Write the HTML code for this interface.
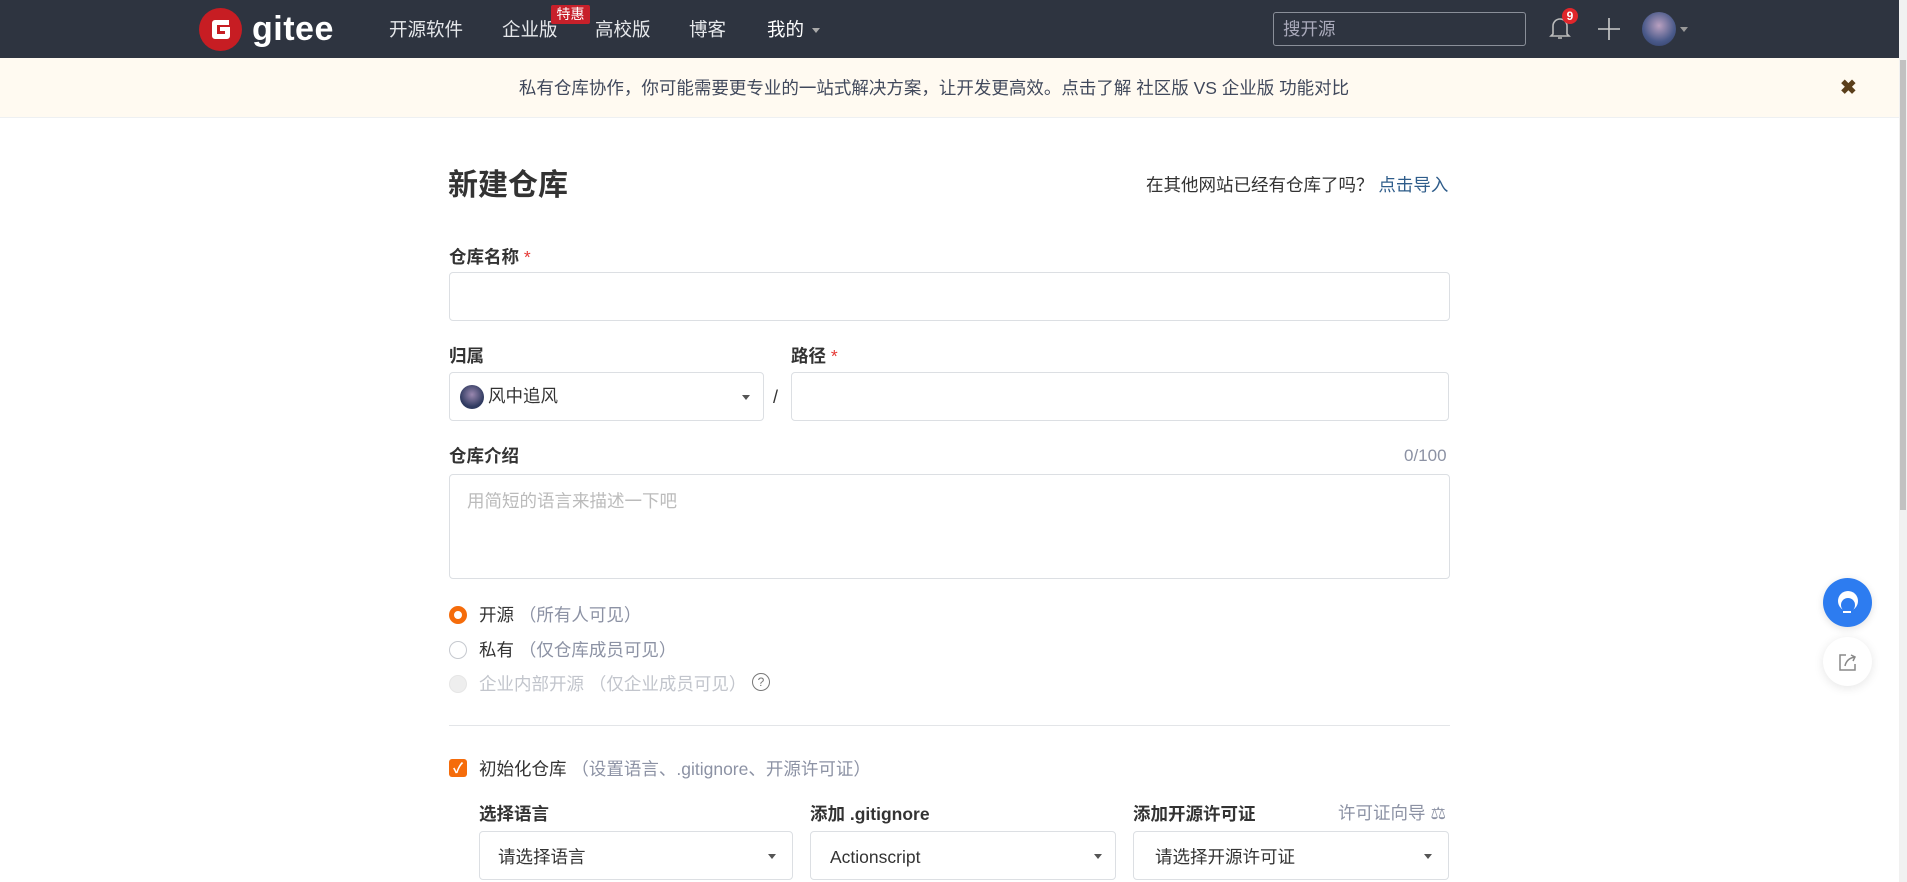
<!DOCTYPE html>
<html><head><meta charset="utf-8"><style>
*{box-sizing:border-box;margin:0;padding:0}
body{width:1907px;height:882px;overflow:hidden;background:#fff;font-family:"Liberation Sans","Noto Sans CJK SC",sans-serif;color:#40485b;position:relative}
.abs{position:absolute;line-height:1.2}
.hdr{left:0;top:0;width:1899px;height:58px;background:#2e3440}
.nav{color:#e6e8eb;font-size:18.5px;top:19px}
.banner{left:0;top:58px;width:1899px;height:60px;background:#fffaf1;border-bottom:1px solid #eef0f2}
.lbl{font-size:17.5px;font-weight:bold;color:#333}
.star{color:#e53935;font-weight:normal}
.box{border:1px solid #dcdfe3;border-radius:4px;background:#fff}
.caret{width:0;height:0;border-left:4px solid transparent;border-right:4px solid transparent;border-top:5px solid #555}
.radio{width:18px;height:18px;border-radius:50%;border:1px solid #c6c9cf;background:#fff}
.t16{font-size:17.5px;color:#333}
.gray{color:#8c92a4}
</style></head><body>
<div class="abs hdr"></div>
<svg class="abs" style="left:199px;top:8px" width="43" height="43" viewBox="0 0 43 43"><circle cx="21.5" cy="21.5" r="21.5" fill="#c71d23"/><path d="M13 15a3 3 0 0 1 3-3h14v5H18v9h8v-3h-5v-4h10v9a3 3 0 0 1-3 3H16a3 3 0 0 1-3-3z" fill="#fff"/></svg>
<div class="abs" style="left:252px;top:9px;font-size:34px;font-weight:bold;color:#fff;letter-spacing:0.5px">gitee</div>
<div class="abs nav" style="left:389px">开源软件</div>
<div class="abs nav" style="left:502px">企业版</div>
<div class="abs" style="left:551px;top:5px;width:39px;height:19px;background:#c7202a;color:#fff;font-size:14px;text-align:center;line-height:19px;border-radius:2px">特惠</div>
<div class="abs nav" style="left:595px">高校版</div>
<div class="abs nav" style="left:689px">博客</div>
<div class="abs nav" style="left:767px;color:#fff">我的</div>
<div class="abs caret" style="left:812px;top:28px;border-top-color:#aaa"></div>
<div class="abs" style="left:1273px;top:12px;width:253px;height:34px;border:1px solid #8a8f99;border-radius:3px;color:#aab;font-size:17.5px;padding:6px 0 0 9px">搜开源</div>
<svg class="abs" style="left:1548px;top:14px" width="24" height="28" viewBox="0 0 24 28"><path d="M5 20V12a7 7 0 0 1 14 0v8l2 2H3z M10 24h4" fill="none" stroke="#bbb" stroke-width="1.6"/></svg>
<div class="abs" style="left:1562px;top:8px;width:16px;height:16px;border-radius:50%;background:#e0262b;color:#fff;font-size:12px;font-weight:bold;text-align:center;line-height:16px">9</div>
<svg class="abs" style="left:1598px;top:18px" width="22" height="22"><path d="M11 0v22M0 11h22" stroke="#ccc" stroke-width="1.6"/></svg>
<div class="abs" style="left:1642px;top:12px;width:34px;height:34px;border-radius:50%;background:radial-gradient(circle at 50% 40%,#b9a0c0,#4a5a8a 60%,#2d3a60)"></div>
<div class="abs caret" style="left:1680px;top:27px;border-top-color:#999"></div>
<div class="abs banner"></div>
<div class="abs" style="left:0;width:1868px;top:78px;text-align:center;font-size:17.5px;color:#40485b">私有仓库协作，你可能需要更专业的一站式解决方案，让开发更高效。点击了解 社区版 VS 企业版 功能对比</div>
<div class="abs" style="left:1840px;top:76px;font-size:20px;font-weight:bold;color:#5a3e1a">✖</div>
<div class="abs" style="left:1899px;top:0;width:8px;height:882px;background:#f1f1f1"></div>
<div class="abs" style="left:1900px;top:60px;width:6px;height:450px;background:#c1c1c1"></div>

<div class="abs" style="left:448px;top:168px;font-size:30px;font-weight:bold;color:#333">新建仓库</div>
<div class="abs t16" style="left:1146px;top:175px">在其他网站已经有仓库了吗？ <span style="color:#2e5c8a">点击导入</span></div>
<div class="abs lbl" style="left:449px;top:247px">仓库名称 <span class="star">*</span></div>
<div class="abs box" style="left:449px;top:272px;width:1001px;height:49px"></div>
<div class="abs lbl" style="left:449px;top:346px">归属</div>
<div class="abs lbl" style="left:791px;top:346px">路径 <span class="star">*</span></div>
<div class="abs box" style="left:449px;top:372px;width:315px;height:49px"></div>
<div class="abs" style="left:460px;top:385px;width:24px;height:24px;border-radius:50%;background:radial-gradient(circle at 50% 40%,#9a88b0,#2f3a60 65%)"></div>
<div class="abs t16" style="left:488px;top:386px">风中追风</div>
<div class="abs caret" style="left:742px;top:395px"></div>
<div class="abs" style="left:773px;top:387px;font-size:18px;color:#333">/</div>
<div class="abs box" style="left:791px;top:372px;width:658px;height:49px"></div>
<div class="abs lbl" style="left:449px;top:446px">仓库介绍</div>
<div class="abs gray" style="left:1404px;top:446px;font-size:17px">0/100</div>
<div class="abs box" style="left:449px;top:474px;width:1001px;height:105px"></div>
<div class="abs" style="left:467px;top:491px;font-size:17.5px;color:#bbb">用简短的语言来描述一下吧</div>
<div class="abs radio" style="left:449px;top:606px;border:5px solid #f56c0b"></div>
<div class="abs t16" style="left:479px;top:605px">开源 <span class="gray">（所有人可见）</span></div>
<div class="abs radio" style="left:449px;top:641px"></div>
<div class="abs t16" style="left:479px;top:640px">私有 <span class="gray">（仅仓库成员可见）</span></div>
<div class="abs radio" style="left:449px;top:675px;background:#eee;border-color:#e6e6e6"></div>
<div class="abs" style="left:479px;top:674px;font-size:17.5px;color:#c2c5cc">企业内部开源 （仅企业成员可见）</div>
<div class="abs" style="left:752px;top:673px;width:18px;height:18px;border:1.5px solid #777;border-radius:50%;font-size:12px;text-align:center;line-height:16px;color:#777">?</div>
<div class="abs" style="left:449px;top:725px;width:1001px;height:1px;background:#e3e5e8"></div>
<div class="abs" style="left:449px;top:759px;width:18px;height:18px;border-radius:3px;background:#f56c0b;color:#fff;font-size:14px;text-align:center;line-height:18px;font-weight:bold">✓</div>
<div class="abs t16" style="left:479px;top:759px">初始化仓库 <span class="gray">（设置语言、.gitignore、开源许可证）</span></div>
<div class="abs lbl" style="left:479px;top:804px">选择语言</div>
<div class="abs lbl" style="left:810px;top:804px">添加 .gitignore</div>
<div class="abs lbl" style="left:1133px;top:804px">添加开源许可证</div>
<div class="abs gray" style="left:1338px;top:803px;font-size:17.5px">许可证向导 ⚖</div>
<div class="abs box" style="left:479px;top:831px;width:314px;height:49px"></div>
<div class="abs t16" style="left:498px;top:847px">请选择语言</div>
<div class="abs caret" style="left:768px;top:854px"></div>
<div class="abs box" style="left:810px;top:831px;width:306px;height:49px"></div>
<div class="abs t16" style="left:830px;top:847px">Actionscript</div>
<div class="abs caret" style="left:1094px;top:854px"></div>
<div class="abs box" style="left:1133px;top:831px;width:316px;height:49px"></div>
<div class="abs t16" style="left:1155px;top:847px">请选择开源许可证</div>
<div class="abs caret" style="left:1424px;top:854px"></div>

<div class="abs" style="left:1823px;top:578px;width:49px;height:49px;border-radius:50%;background:#2d7cf0;box-shadow:0 2px 8px rgba(0,0,0,.12)"></div>
<svg class="abs" style="left:1834px;top:588px" width="28" height="30" viewBox="0 0 28 30"><circle cx="14" cy="13" r="10" fill="#fff"/><circle cx="14" cy="17" r="7" fill="#2d7cf0"/><path d="M9 24h8" stroke="#fff" stroke-width="2"/></svg>
<div class="abs" style="left:1823px;top:637px;width:49px;height:49px;border-radius:50%;background:#fff;box-shadow:0 2px 10px rgba(0,0,0,.1)"></div>
<svg class="abs" style="left:1838px;top:652px" width="20" height="20" viewBox="0 0 20 20"><path d="M8 3H2v15h15v-6" fill="none" stroke="#888" stroke-width="1.5"/><path d="M7 14c1-5 4-8 10-9M13 3l4 2-2 4" fill="none" stroke="#888" stroke-width="1.5"/></svg>
</body></html>
